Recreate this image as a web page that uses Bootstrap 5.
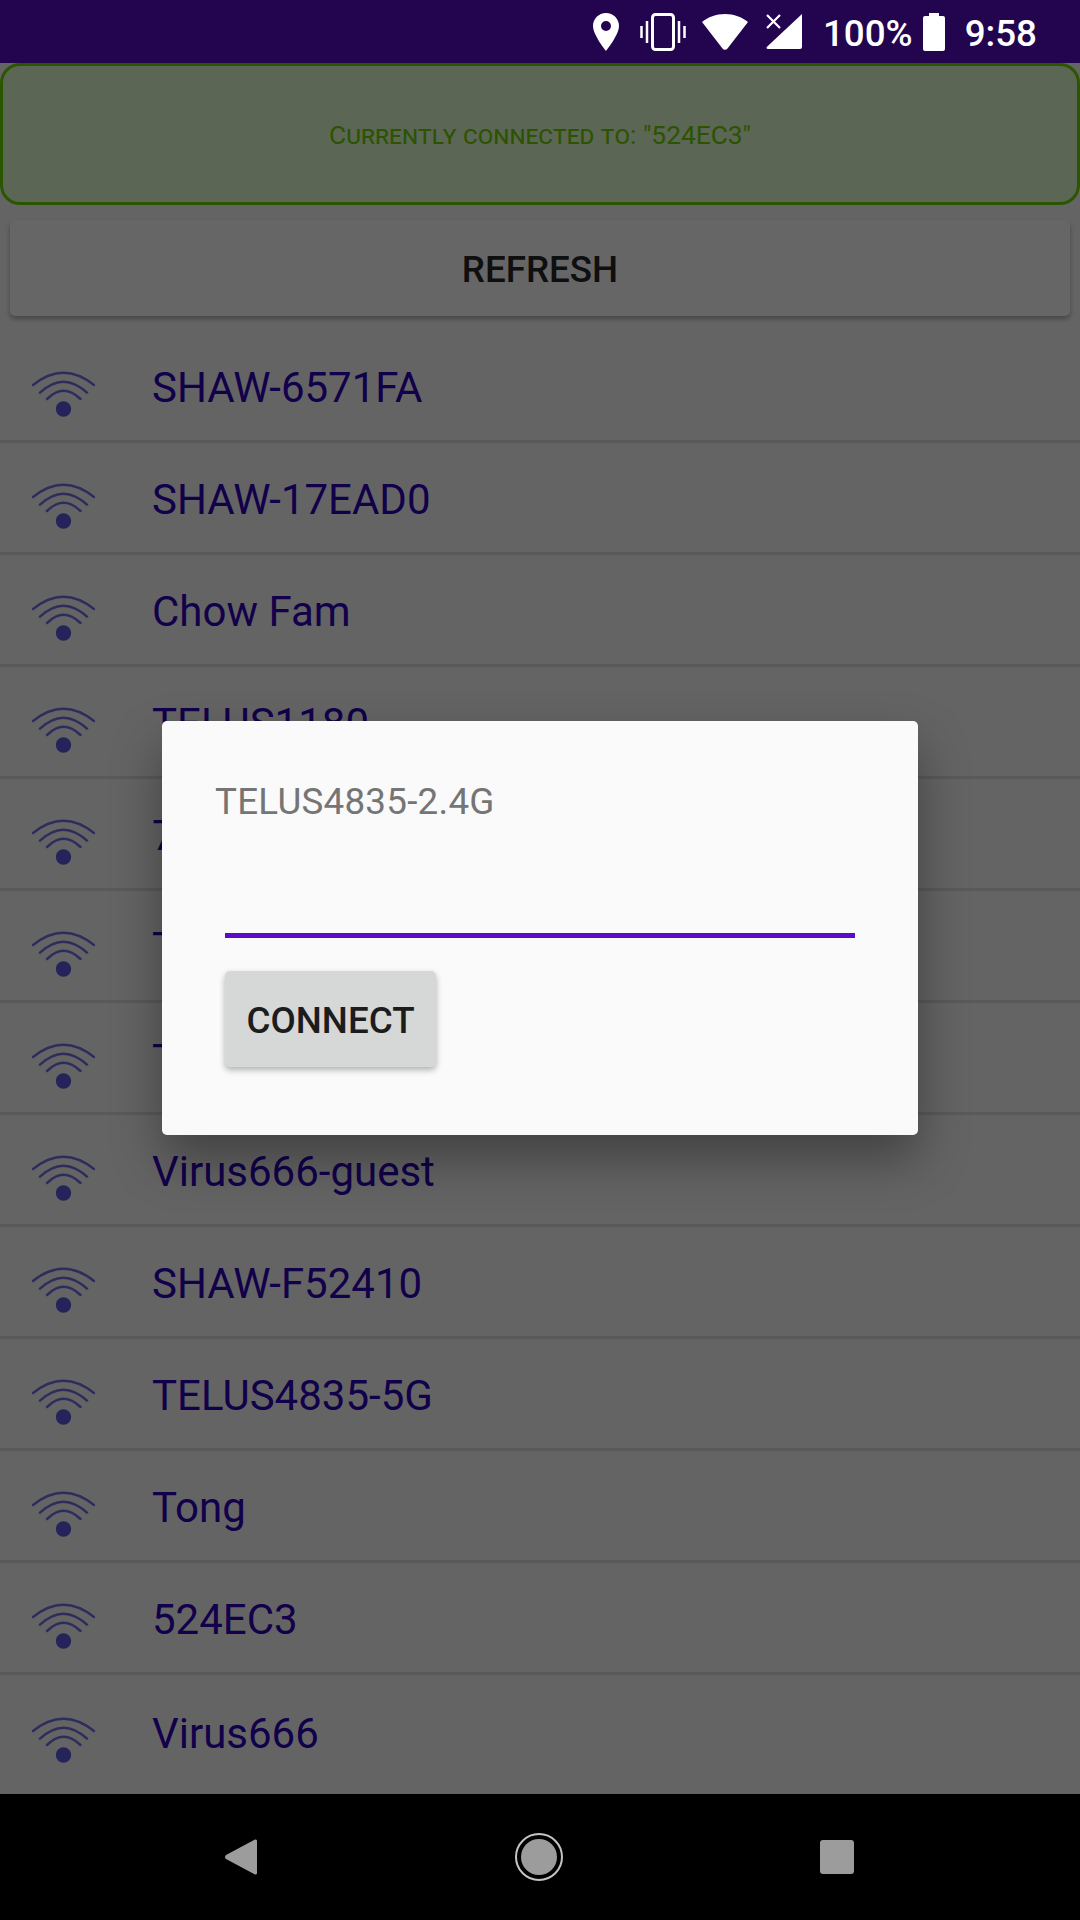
<!DOCTYPE html>
<html lang="en">
  <head>
    <meta charset="UTF-8" />
    <title>Wifi Connect</title>
    <link
      href="https://cdn.jsdelivr.net/npm/bootstrap@5.3.0/dist/css/bootstrap.min.css"
      rel="stylesheet"
    />
    <style>
      body {
        width: 1080px;
        height: 1920px;
        overflow: hidden;
        background: #fafafa;
        font-family: Roboto, "Liberation Sans", sans-serif;
      }
      .phone {
        height: 1920px;
      }
      .status-bar {
        height: 63px;
        background: #23054f;
        color: #fff;
        font-size: 36.75px;
        font-weight: 500;
        padding-right: 43px;
        position: relative;
        z-index: 3;
      }
      .status-text {
        padding-top: 4px;
      }
      .app-body {
        height: 1731px;
        overflow: hidden;
      }
      .conn-box {
        height: 142px;
        padding-top: 3px;
        border: 3px solid #6cd800;
        border-radius: 20px;
        background: #e6ffd2;
        color: #6ed000;
        font-size: 26.3px;
        font-variant: small-caps;
      }
      .refresh-btn {
        display: block;
        width: 1060px;
        height: 96px;
        margin: 15px 10px 0;
        padding: 3px 0 0;
        border: 0;
        border-radius: 5px;
        background: #ffffff;
        color: #262626;
        font-size: 36.75px;
        font-weight: 500;
        box-shadow: 0 3px 5px rgba(0, 0, 0, 0.3);
      }
      .wifi-list {
        margin-top: 15px;
        border-radius: 0;
      }
      .wifi-list .wifi-row {
        height: 112px;
        padding: 0 0 0 32px;
        gap: 57px;
        background: transparent;
        border-width: 0 0 3px;
        border-style: solid;
        border-color: #dfdfdf;
        color: #2e00b8;
        font-size: 42px;
      }
      .wifi-name {
        padding-top: 4px;
      }
      .wifi-icon {
        width: 63px;
        height: 48px;
        margin-top: 15px;
        flex: none;
      }
      .scrim {
        position: absolute;
        inset: 63px 0 126px 0;
        background: rgba(0, 0, 0, 0.6);
        z-index: 1;
      }
      .dialog-box {
        position: absolute;
        left: 162px;
        top: 721px;
        width: 756px;
        height: 414px;
        background: #fafafa;
        border: 0;
        border-radius: 5px;
        box-shadow: 0 24px 50px rgba(0, 0, 0, 0.35);
        padding: 59px 63px 0 53px;
        z-index: 2;
      }
      .dialog-title {
        color: #757575;
        font-size: 36.75px;
        line-height: 43px;
        letter-spacing: 0.25px;
      }
      .dialog-input {
        display: block;
        width: 630px;
        height: 48px;
        margin: 67px 0 0 10px;
        padding: 0;
        background: transparent;
        border: 0;
        border-bottom: 5px solid #5a0cc8;
        border-radius: 0;
        box-shadow: none;
      }
      .connect-btn {
        width: 211px;
        height: 96px;
        margin: 33px 0 0 10px;
        padding: 3px 0 0;
        border: 0;
        border-radius: 5px;
        background: #d6d7d7;
        color: #1c1c1c;
        font-size: 36.75px;
        font-weight: 500;
        box-shadow: 0 3px 6px rgba(0, 0, 0, 0.3);
      }
      .nav-bar {
        height: 126px;
        background: #000;
        position: relative;
        z-index: 3;
      }
    </style>
  </head>
  <body>
    <div class="phone position-relative d-flex flex-column">
      <!-- status bar -->
      <div class="status-bar d-flex align-items-center justify-content-end">
        <svg width="26" height="38" viewBox="0 0 26 38" style="margin-right:21px">
          <path fill="#fff" fill-rule="evenodd" d="M13 0C5.8 0 0 5.8 0 13c0 9 13 25 13 25s13-16 13-25C26 5.800 20.200 0 13 0zm0 18a5 5 0 1 1 0-10 5 5 0 0 1 0 10z" />
        </svg>
        <svg width="46" height="38" viewBox="0 0 46 38" class="me-3">
          <rect x="12.500" y="1.500" width="21" height="35" rx="3" fill="none" stroke="#fff" stroke-width="3" />
          <path stroke="#fff" stroke-width="2.500" d="M1.500 13v12M7 8v22M39 8v22M44.500 13v12" />
        </svg>
        <svg width="46" height="36" viewBox="0 0 46 36" style="margin-right:18px">
          <path fill="#fff" d="M23 0C14 0 6 3 0 8l20.500 26.500a3 3 0 0 0 5 0L46 8C40 3 32 0 23 0z" />
        </svg>
        <svg width="36" height="35" viewBox="0 0 36 35" style="margin-right:21px">
          <path fill="#fff" d="M36 0v33a2 2 0 0 1-2 2H2c-1.500 0-2-1-1-2.200z" />
          <path stroke="#fff" stroke-width="2.200" d="M1 1l13 13M14 1L1 14" />
        </svg>
        <span class="status-text" style="margin-right:10px">100%</span>
        <svg width="22" height="38" viewBox="0 0 22 38" style="margin-right:20px">
          <path fill="#fff" d="M6 0h10v3h4a2 2 0 0 1 2 2v31a2 2 0 0 1-2 2H2a2 2 0 0 1-2-2V5a2 2 0 0 1 2-2h4z" />
        </svg>
        <span class="status-text">9:58</span>
      </div>

      <!-- app content -->
      <div class="app-body flex-grow-1">
        <div class="conn-box d-flex align-items-center justify-content-center">Currently connected to: "524EC3"</div>
        <button class="refresh-btn" type="button">REFRESH</button>
        <div class="wifi-list list-group list-group-flush" id="wifi-list"></div>
      </div>

      <!-- nav bar -->
      <div class="nav-bar d-flex align-items-center">
        <svg width="32" height="36" viewBox="0 0 32 36" style="margin:0 0 0 225px">
          <path fill="#9c9c9c" d="M30 0.500a1.500 1.500 0 0 1 2 1.500v32a1.500 1.500 0 0 1-2 1.500L1 20a2.500 2.500 0 0 1 0-4z" />
        </svg>
        <svg width="48" height="48" viewBox="0 0 48 48" style="margin:0 0 0 258px">
          <circle cx="24" cy="24" r="23" fill="none" stroke="#c4c4c4" stroke-width="2" />
          <circle cx="24" cy="24" r="18" fill="#9c9c9c" />
        </svg>
        <svg width="34" height="34" viewBox="0 0 34 34" style="margin:0 0 0 257px">
          <rect width="34" height="34" rx="3" fill="#9c9c9c" />
        </svg>
      </div>

      <div class="scrim"></div>

      <!-- password dialog -->
      <div class="dialog-box card">
        <div class="dialog-title">TELUS4835-2.4G</div>
        <input class="dialog-input form-control" type="password" />
        <div><button class="connect-btn" type="button">CONNECT</button></div>
      </div>
    </div>

    <script>
      const networks = [
        "SHAW-6571FA", "SHAW-17EAD0", "Chow Fam", "TELUS1180", "7", "T", "T",
        "Virus666-guest", "SHAW-F52410", "TELUS4835-5G", "Tong", "524EC3", "Virus666",
      ];
      const list = document.getElementById("wifi-list");

      networks.forEach((name) => {
        const row = document.createElement("div");
        row.className = "wifi-row list-group-item d-flex align-items-center";
        row.innerHTML = `
          <svg class="wifi-icon" viewBox="0 0 63 48">
            <g fill="none" stroke="#5a58e4" stroke-width="2.500" stroke-linecap="round" opacity="0.85">
              <path d="M1 16Q31.500 -8.600 62 16" />
              <path d="M8 23.700Q31.500 1.700 55 23.700" />
              <path d="M15 30Q31.500 13.400 48.500 30" />
            </g>
            <circle cx="31.500" cy="40" r="7.700" fill="#5a58e4" />
          </svg>
          <span class="wifi-name">${name}</span>`;
        list.appendChild(row);
      });
    </script>
  </body>
</html>
